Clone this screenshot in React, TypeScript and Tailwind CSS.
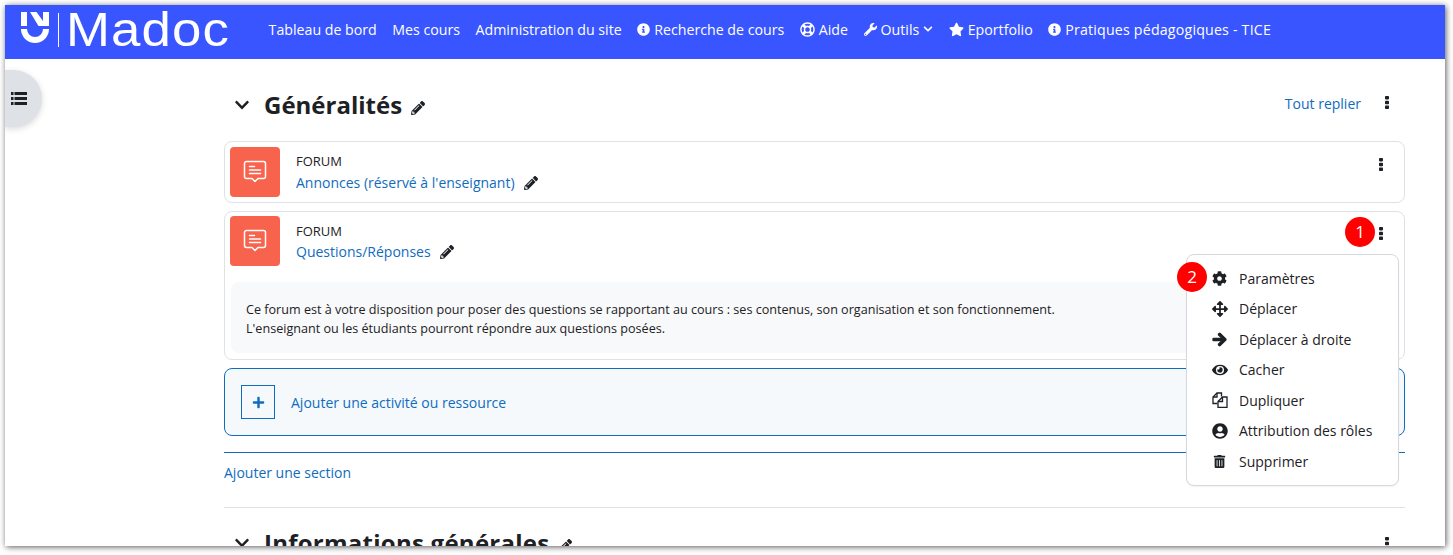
import type { ReactNode } from "react";
import {
  FaArrowRight,
  FaArrowsAlt,
  FaChevronDown,
  FaCog,
  FaEye,
  FaInfoCircle,
  FaPencilAlt,
  FaPlus,
  FaRegLifeRing,
  FaStar,
  FaTrashAlt,
  FaUserCircle,
  FaWrench,
} from "react-icons/fa";

function LogoMark() {
  return (
    <svg width="28" height="31" viewBox="0 0 28 31" fill="white" className="-mt-[4px] shrink-0">
      <rect x="0" y="0" width="6" height="14" />
      <rect x="22" y="0" width="6" height="14" />
      <path d="M9 0h6.500L22 9v5h-4.500z" />
      <path d="M0 17h6a8 8 0 0 0 16 0h6a14 14 0 0 1-28 0z" />
    </svg>
  );
}

function ForumIcon() {
  return (
    <div className="flex h-[50px] w-[50px] shrink-0 items-center justify-center rounded-[4px] bg-[#f7634d]">
      <svg width="24" height="24" viewBox="0 0 24 24" fill="none" stroke="white" strokeWidth="1.500" strokeLinecap="round" strokeLinejoin="round">
        <path d="M3.500 1.500h17a2 2 0 0 1 2 2v13a2 2 0 0 1-2 2h-5.500l-3 3-3-3h-5.500a2 2 0 0 1-2-2v-13a2 2 0 0 1 2-2z" />
        <path d="M6.500 6.500h5M6.500 10h11M6.500 13.500h11" />
      </svg>
    </div>
  );
}

function DuplicateIcon() {
  return (
    <svg width="16" height="16" viewBox="0 0 16 16" fill="none" stroke="#1d2125" strokeWidth="1.300">
      <path d="M5.500 11.500H1V5l4-4h4.500v3.500" />
      <path d="M5 1v4H1" />
      <path d="M10.500 5H15v10.300H6V9.500z" />
      <path d="M10.500 5v4.500H6" />
    </svg>
  );
}

function ListIcon() {
  return (
    <svg width="16" height="13" viewBox="0 0 16 13" fill="#1d2125">
      <path d="M0 0h2.500v3H0zM3.500 0H16v3H3.500zM0 5h2.500v3H0zM3.500 5H16v3H3.500zM0 10h2.500v3H0zM3.500 10H16v3H3.500z" />
    </svg>
  );
}

function Kebab({ className }: { className?: string }) {
  return (
    <svg width="4" height="13" viewBox="0 0 4 13" fill="#1d2125" className={`shrink-0 ${className ?? ""}`}>
      <rect x="0" y="0" width="4" height="3.400" rx="0.800" />
      <rect x="0" y="4.800" width="4" height="3.400" rx="0.800" />
      <rect x="0" y="9.600" width="4" height="3.400" rx="0.800" />
    </svg>
  );
}

function NavItem({ icon, children }: { icon?: ReactNode; children: ReactNode }) {
  return (
    <span className="flex items-center gap-[4px] whitespace-nowrap">
      {icon}
      {children}
    </span>
  );
}

function MenuItem({ icon, label }: { icon: ReactNode; label: string }) {
  return (
    <div className="flex h-[30.500px] items-center">
      <span className="flex w-[52px] justify-center pl-[13px] text-[15px] text-[#1d2125]">{icon}</span>
      <span className="text-[#1d2125]">{label}</span>
    </div>
  );
}

function Badge({ n, className }: { n: number; className: string }) {
  return (
    <div className={`absolute flex h-[30px] w-[30px] items-center justify-center rounded-full bg-[#fe0000] text-[17px] text-white ${className}`}>
      {n}
    </div>
  );
}

export default function App() {
  return (
    <div className="h-[555px] w-[1453px] overflow-hidden bg-white pb-[9px] pl-[5px] pr-[8px] pt-[5px] font-['Open_Sans','Noto_Sans',sans-serif] text-[14px] text-[#1d2125]">
      <div className="relative flex h-full flex-col overflow-hidden bg-white shadow-[1px_1px_6px_rgba(0,0,0,0.65)]">
        {/* Top nav */}
        <nav className="flex h-[54px] shrink-0 items-center bg-[#3855ff] pb-[5px] pl-[16px] text-[14.200px] text-white">
          <LogoMark />
          <span className="ml-[9px] mr-[7px] h-[34px] w-px shrink-0 bg-white" />
          <span className="origin-left scale-x-[1.1] font-['Liberation_Sans',sans-serif] text-[48px] leading-none tracking-[1px]">Madoc</span>
          <div className="ml-[53.500px] flex items-center gap-[15.500px]">
            <NavItem>Tableau de bord</NavItem>
            <NavItem>Mes cours</NavItem>
            <NavItem>Administration du site</NavItem>
            <NavItem icon={<FaInfoCircle className="text-[13px]" />}>Recherche de cours</NavItem>
            <NavItem icon={<FaRegLifeRing className="text-[15px]" />}>Aide</NavItem>
            <NavItem icon={<FaWrench className="text-[13px]" />}>
              Outils
              <FaChevronDown className="text-[10px]" />
            </NavItem>
            <NavItem icon={<FaStar className="text-[15px]" />}>Eportfolio</NavItem>
            <NavItem icon={<FaInfoCircle className="text-[13px]" />}>
              <span className="tracking-[0.200px]">Pratiques pédagogiques - TICE</span>
            </NavItem>
          </div>
        </nav>

        {/* Drawer toggle */}
        <div className="absolute left-0 top-[65px] flex h-[57px] w-[37px] items-center rounded-r-full bg-[#dee2e6] pl-[6px] shadow-[0_2px_6px_rgba(0,0,0,0.15)]">
          <ListIcon />
        </div>

        <main className="ml-[219px] mr-[40px] flex flex-col">
          {/* Section heading */}
          <div className="flex h-[82px] shrink-0 items-center pt-[10px]">
            <FaChevronDown className="ml-[10px] text-[16px]" />
            <h2 className="ml-[14px] text-[24px] font-bold leading-none">Généralités</h2>
            <FaPencilAlt className="ml-[9px] mt-[5px] text-[14px]" />
            <span className="ml-auto -translate-y-[2px] text-[#0f6cbf]">Tout replier</span>
            <Kebab className="ml-[24px] mr-[16px] -translate-y-[3px]" />
          </div>

          {/* Activities */}
          <div className="flex h-[62px] shrink-0 rounded-[8px] border border-[#dee2e6] p-[5px]">
            <ForumIcon />
            <div className="ml-[16px] flex-1">
              <div className="mt-[4px] text-[13px] leading-[20px]">FORUM</div>
              <div className="mt-[1px] flex items-center text-[#0f6cbf]">
                Annonces (réservé à l'enseignant)
                <FaPencilAlt className="ml-[9px] text-[14px] text-[#1d2125]" />
              </div>
            </div>
            <Kebab className="mr-[16px] mt-[11px]" />
          </div>

          <div className="mt-[8px] h-[149px] shrink-0 rounded-[8px] border border-[#dee2e6] px-[5px] pt-[4px]">
            <div className="flex">
              <ForumIcon />
              <div className="ml-[16px] flex-1">
                <div className="mt-[5px] text-[13px] leading-[20px]">FORUM</div>
                <div className="flex items-center text-[#0f6cbf]">
                  Questions/Réponses
                  <FaPencilAlt className="ml-[9px] text-[14px] text-[#1d2125]" />
                </div>
              </div>
              <Kebab className="mr-[16px] mt-[11px]" />
            </div>
            <div className="ml-[1px] mt-[16px] h-[71px] rounded-[8px] bg-[#f8f9fa] px-[15px] pt-[19px] text-[12.600px] leading-[18.500px]">
              <p>Ce forum est à votre disposition pour poser des questions se rapportant au cours : ses contenus, son organisation et son fonctionnement.</p>
              <p>L'enseignant ou les étudiants pourront répondre aux questions posées.</p>
            </div>
          </div>

          {/* Add activity */}
          <div className="mt-[8px] flex h-[68px] shrink-0 items-center rounded-[8px] border border-[#0f6cbf] bg-[#f5f9fc] pl-[16px] text-[#0f6cbf]">
            <span className="flex h-[34px] w-[34px] items-center justify-center border border-[#0f6cbf]">
              <FaPlus className="text-[13px]" />
            </span>
            <span className="ml-[16px]">Ajouter une activité ou ressource</span>
          </div>

          <div className="mt-[16px] h-px shrink-0 bg-[#0f6cbf]" />
          <div className="mt-[10px] leading-[20px] text-[#0f6cbf]">Ajouter une section</div>
          <div className="mt-[24px] h-px shrink-0 bg-[#dee2e6]" />

          {/* Next section, cut off by the window */}
          <div className="mt-[20px] flex items-center">
            <FaChevronDown className="ml-[10px] text-[16px]" />
            <h2 className="ml-[14px] text-[24px] font-bold leading-[30px] tracking-[0.250px]">Informations générales</h2>
            <FaPencilAlt className="ml-[9px] mt-[5px] text-[14px]" />
            <Kebab className="ml-auto mr-[16px]" />
          </div>
        </main>

        {/* Action menu */}
        <div className="absolute left-[1181px] top-[249px] w-[213px] rounded-[8px] border border-[#d5d8dc] bg-white py-[8px] shadow-[0_1px_2px_rgba(0,0,0,0.05)]">
          <MenuItem icon={<FaCog />} label="Paramètres" />
          <MenuItem icon={<FaArrowsAlt className="text-[16px]" />} label="Déplacer" />
          <MenuItem icon={<FaArrowRight stroke="currentColor" strokeWidth={40} />} label="Déplacer à droite" />
          <MenuItem icon={<FaEye className="text-[16px]" />} label="Cacher" />
          <MenuItem icon={<DuplicateIcon />} label="Dupliquer" />
          <MenuItem icon={<FaUserCircle className="text-[16px]" />} label="Attribution des rôles" />
          <MenuItem icon={<FaTrashAlt className="text-[13px]" />} label="Supprimer" />
        </div>

        <Badge n={1} className="left-[1340px] top-[212px]" />
        <Badge n={2} className="left-[1172px] top-[257px]" />
      </div>
    </div>
  );
}
